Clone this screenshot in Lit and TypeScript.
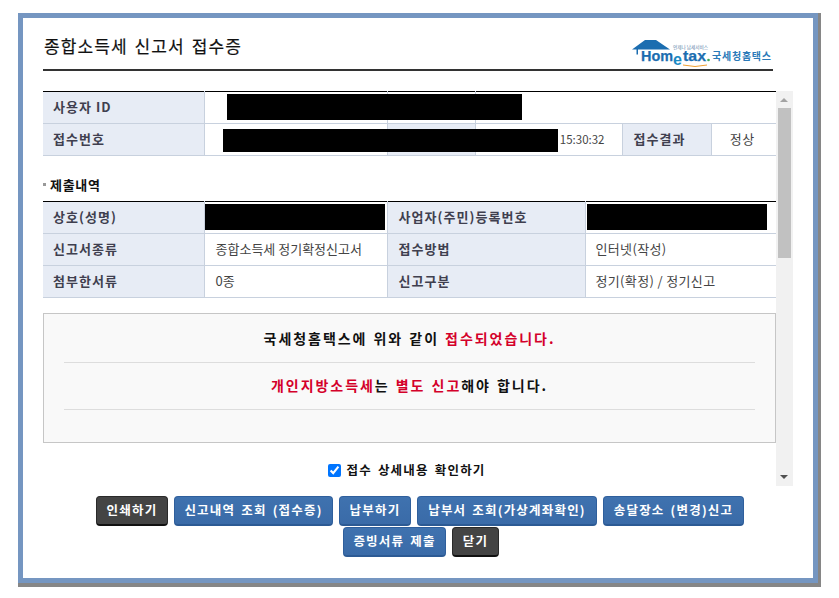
import { LitElement, html, css } from "lit";
import { customElement } from "lit/decorators.js";

@customElement("app-root")
export class AppRoot extends LitElement {
  static styles = css`
    :host { display: block; height: 598px; background: #fff; font-family: "Noto Sans CJK KR", "Liberation Sans", sans-serif; color: #333; }
    .page { padding: 13px 0 0 18px; }
    .shadow { width: 800px; height: 570px; padding: 0 3px 4px 0; background: #868686; }
    .window { box-sizing: border-box; width: 800px; height: 570px; border: 5px solid #7596c1; background: #fff; padding: 0 20px; }
    .head { display: flex; justify-content: space-between; align-items: flex-start; width: 730px; height: 51px; border-bottom: 2px solid #333; }
    h1 { margin: 16px 0 0 1px; font-size: 17px; line-height: 24px; font-weight: 400; color: #111; letter-spacing: 1.1px; word-spacing: 2px; -webkit-text-stroke: 0.2px #111; }
    .logo { display: block; margin: 22px 1px 0 0; }
    .scroller { display: flex; width: 750px; height: 395px; margin-top: 20px; }
    .main { width: 733px; overflow: hidden; }
    .bar { position: relative; width: 17px; background: #f1f1f1; }
    .thumb { position: absolute; left: 2px; top: 17px; width: 13px; height: 150px; background: #c1c1c1; }
    .arrow { position: absolute; left: 4px; width: 0; height: 0; border-left: 4px solid transparent; border-right: 4px solid transparent; }
    .arrow.up { top: 7px; border-bottom: 4px solid #a3a3a3; }
    .arrow.down { bottom: 7px; border-top: 4px solid #505050; }
    .tw { position: relative; }
    table { border-collapse: collapse; table-layout: fixed; width: 733px; border-top: 1px solid #000; }
    td, th { height: 29px; padding: 0 0 2px; border: 1px solid #c8d1de; border-top: 0; font-size: 13px; line-height: 16px; overflow: hidden; white-space: nowrap; }
    td:first-child, th:first-child { border-left: 0; }
    td:last-child, th:last-child { border-right: 0; }
    th { background: #e7ecf5; font-weight: 700; color: #3f3f4f; text-align: left; padding-left: 10px; letter-spacing: 1.05px; }
    th.inner { padding-left: 11px; }
    td { background: #fff; padding-left: 11px; color: #444; }
    td.tint { background: #e7ecf5; }
    td.wide { padding-left: 10px; letter-spacing: 0.35px; }
    td.center { text-align: center; padding: 0 3px 2px 0; letter-spacing: 0.6px; }
    td.time { text-align: right; padding: 0 17px 2px 0; font-size: 11.5px; }
    .mask { position: absolute; background: #000; }
    .m1 { left: 184px; top: 3px; width: 295px; height: 26px; }
    .m2 { left: 180px; top: 38px; width: 335px; height: 23px; }
    .m3 { left: 162px; top: 3px; width: 180px; height: 26px; }
    .m4 { left: 544px; top: 3px; width: 180px; height: 26px; }
    h2 { display: flex; align-items: center; gap: 4px; margin: 19px 0 8px; height: 18px; font-size: 13px; font-weight: 700; color: #111; letter-spacing: 0.7px; }
    h2::before { content: ""; width: 3px; height: 3px; background: #999; }
    .notice { box-sizing: border-box; height: 130px; margin-top: 15px; padding: 1px 20px 0; border: 1px solid #c6c6c6; background: #f9f9f9; text-align: center; font-size: 14px; font-weight: 700; color: #111; letter-spacing: 1.95px; word-spacing: 1px; }
    .notice p { margin: 0; height: 47px; line-height: 47px; border-bottom: 1px solid #ddd; }
    .notice p + p { height: 46px; line-height: 45px; }
    em { font-style: normal; color: #d4002a; }
    .check { display: flex; justify-content: center; align-items: center; gap: 5px; margin-top: 18px; padding-right: 6px; font-size: 12.5px; font-weight: 700; color: #111; letter-spacing: 1.2px; word-spacing: 2px; line-height: 18px; }
    .check input { width: 13px; height: 13px; margin: 0 0 0 1px; accent-color: #0075ff; }
    .buttons { display: flex; flex-wrap: wrap; justify-content: center; gap: 1px 6px; width: 754px; margin-top: 10px; }
    button { box-sizing: border-box; height: 30px; padding: 0 0 3px; border: 1px solid #2f5f9c; border-bottom: 2px solid #2c5a94; border-radius: 4px; background: linear-gradient(#3f72af, #3a6ba8); color: #fff; font-family: inherit; font-size: 12.5px; font-weight: 700; letter-spacing: 1.2px; word-spacing: 2px; white-space: nowrap; }
    button.dark { background: #444; border-color: #2a2a2a; border-bottom-color: #111; }
    .w47 { width: 47px; } .w72 { width: 72px; } .w103 { width: 103px; margin-left: 2px; } .w141 { width: 141px; } .w159 { width: 159px; } .w180 { width: 180px; }
  `;

  render() {
    return html`
      <div class="page"><div class="shadow"><div class="window">
        <div class="head">
          <h1>종합소득세 신고서 접수증</h1>
          <svg class="logo" width="140" height="28" viewBox="0 0 140 28">
            <path d="M0 9.5 13 0h11l14 9.5H6v5H4.5V9.5z" fill="#1b6db0"/>
            <text x="9" y="21" font-family="Liberation Sans" font-size="15" font-weight="700" fill="#1b6db0" stroke="#1b6db0" stroke-width="0.25" textLength="32" lengthAdjust="spacingAndGlyphs">Hom</text>
            <text x="41" y="25" font-family="Liberation Sans" font-size="16" font-weight="700" fill="#1b8ac4">e</text>
            <text x="51" y="21" font-family="Liberation Sans" font-size="15" font-weight="700" fill="#1b6db0" stroke="#1b6db0" stroke-width="0.25" textLength="23" lengthAdjust="spacingAndGlyphs">tax</text>
            <circle cx="76.5" cy="20" r="1.3" fill="#3aa655"/>
            <path d="M51 25q12 3 24 0" fill="none" stroke="#f0a030" stroke-width="1"/>
            <text x="41" y="9" font-family="Noto Sans CJK KR" font-size="4.5" fill="#5a7fa8" textLength="35" lengthAdjust="spacingAndGlyphs">언제나 납세서비스</text>
            <text x="80" y="20" font-family="Noto Sans CJK KR" font-size="10" font-weight="700" fill="#2b7ab8" textLength="59">국세청홈택스</text>
          </svg>
        </div>
        <div class="scroller">
          <div class="main">
            <div class="tw">
              <table>
                <colgroup><col style="width:161px"><col style="width:183px"><col style="width:88px"><col style="width:147px"><col style="width:89px"><col style="width:65px"></colgroup>
                <tr><th>사용자 ID</th><td></td><td></td><td colspan="3"></td></tr>
                <tr><th>접수번호</th><td></td><td class="tint"></td><td class="time">15:30:32</td><th class="inner">접수결과</th><td class="center">정상</td></tr>
              </table>
              <div class="mask m1"></div><div class="mask m2"></div>
            </div>
            <h2>제출내역</h2>
            <div class="tw">
              <table>
                <colgroup><col style="width:161px"><col style="width:183px"><col style="width:198px"><col style="width:191px"></colgroup>
                <tr><th>상호(성명)</th><td></td><th class="inner">사업자(주민)등록번호</th><td></td></tr>
                <tr><th>신고서종류</th><td>종합소득세 정기확정신고서</td><th class="inner">접수방법</th><td class="wide">인터넷(작성)</td></tr>
                <tr><th>첨부한서류</th><td>0종</td><th class="inner">신고구분</th><td class="wide">정기(확정) / 정기신고</td></tr>
              </table>
              <div class="mask m3"></div><div class="mask m4"></div>
            </div>
            <div class="notice">
              <p>국세청홈택스에 위와 같이 <em>접수되었습니다.</em></p>
              <p><em>개인지방소득세</em>는 <em>별도 신고</em>해야 합니다.</p>
            </div>
            <label class="check"><input type="checkbox" checked />접수 상세내용 확인하기</label>
          </div>
          <div class="bar"><div class="arrow up"></div><div class="thumb"></div><div class="arrow down"></div></div>
        </div>
        <div class="buttons">
          <button class="dark w72">인쇄하기</button>
          <button class="w159">신고내역 조회 (접수증)</button>
          <button class="w72">납부하기</button>
          <button class="w180">납부서 조회(가상계좌확인)</button>
          <button class="w141">송달장소 (변경)신고</button>
          <button class="w103">증빙서류 제출</button>
          <button class="dark w47">닫기</button>
        </div>
      </div></div></div>
    `;
  }
}
